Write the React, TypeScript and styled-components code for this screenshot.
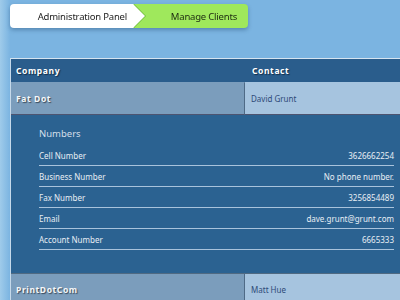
import React from "react";
import styled, { createGlobalStyle } from "styled-components";

const Global = createGlobalStyle`
  html, body { margin: 0; padding: 0; }
  body {
    width: 400px; height: 300px; overflow: hidden;
    background: linear-gradient(to right, #9fcbea 0px, #7bb4e1 10px, #7bb4e1 100%);
    font-family: "Noto Sans", "Open Sans", sans-serif;
  }
`;

const Page = styled.div`
  display: flex;
  flex-direction: column;
  padding: 4px 0 0 10px;
`;

const Crumbs = styled.div`
  display: flex;
  height: 24px;
  width: 238px;
  filter: drop-shadow(0 2px 2px rgba(40, 80, 120, 0.45));
`;

const CrumbFirst = styled.div`
  position: relative;
  z-index: 2;
  width: 123px;
  background: #fff;
  border-radius: 4px 0 0 4px;
  display: flex;
  align-items: center;
  justify-content: flex-end;
  padding-right: 6px;
  box-sizing: border-box;
  font-size: 9.5px;
  letter-spacing: -0.2px;
  color: #1c1c1c;
  &::after {
    content: "";
    position: absolute;
    right: -12px;
    top: 0;
    border-style: solid;
    border-width: 12px 0 12px 12px;
    border-color: transparent transparent transparent #fff;
  }
  &::before {
    content: "";
    position: absolute;
    right: -13px;
    top: 0;
    border-style: solid;
    border-width: 12px 0 12px 12px;
    border-color: transparent transparent transparent #6fb83a;
  }
`;

const CrumbLast = styled.div`
  flex: 1;
  background: #9fe85c;
  border-radius: 0 4px 4px 0;
  display: flex;
  align-items: center;
  justify-content: flex-end;
  padding-right: 11px;
  font-size: 9.5px;
  letter-spacing: -0.2px;
  color: #1c2a10;
`;

const Table = styled.div`
  margin-top: 30px;
  border-top: 1px solid #d6e4f0;
  border-left: 1px solid #c5d9ea;
  display: grid;
  grid-template-columns: 234px 1fr;
`;

const HeadCell = styled.div<{ $pad?: number }>`
  background: #2a5d8c;
  height: 23px;
  display: flex;
  align-items: center;
  padding-left: ${(p) => p.$pad ?? 5}px;
  font-size: 8.5px;
  font-weight: bold;
  letter-spacing: 0.6px;
  color: #fff;
  text-shadow: 1px 1px 1px #14304a;
`;

const CompanyCell = styled.div<{ $last?: boolean }>`
  background: #7b9dbc;
  height: 31px;
  display: flex;
  align-items: center;
  padding-left: 5px;
  font-size: 8.5px;
  font-weight: bold;
  letter-spacing: 0.6px;
  color: #f4f6f8;
  text-shadow: 1px 1px 1px #3a4a5a;
  border-right: 1px solid #4e6a86;
  border-bottom: 1px solid ${(p) => (p.$last ? "transparent" : "#4d5470")};
  border-top: 1px solid ${(p) => (p.$last ? "#506a82" : "transparent")};
`;

const ContactCell = styled.div<{ $last?: boolean }>`
  background: #a6c4df;
  height: 31px;
  display: flex;
  align-items: center;
  padding-left: 6px;
  font-size: 8px;
  color: #2e4a78;
  border-bottom: 1px solid ${(p) => (p.$last ? "transparent" : "#4d5470")};
  border-top: 1px solid ${(p) => (p.$last ? "#506a82" : "transparent")};
`;

const Detail = styled.div`
  grid-column: 1 / span 2;
  background: #2b6291;
  padding: 6px 6px 23px 28px;
`;

const DetailTitle = styled.div`
  font-size: 9.5px;
  color: #d4dfe9;
  height: 24px;
  display: flex;
  align-items: center;
`;

const InfoRow = styled.div`
  display: flex;
  justify-content: space-between;
  align-items: center;
  height: 20px;
  border-bottom: 1px solid #a9c3dc;
  font-size: 8px;
  color: #e8eef4;
`;

const rows: [string, string][] = [
  ["Cell Number", "3626662254"],
  ["Business Number", "No phone number."],
  ["Fax Number", "3256854489"],
  ["Email", "dave.grunt@grunt.com"],
  ["Account Number", "6665333"],
];

export default function App() {
  return (
    <>
      <Global />
      <Page>
        <Crumbs>
          <CrumbFirst>Administration Panel</CrumbFirst>
          <CrumbLast>Manage Clients</CrumbLast>
        </Crumbs>
        <Table>
          <HeadCell>Company</HeadCell>
          <HeadCell $pad={7}>Contact</HeadCell>
          <CompanyCell>Fat Dot</CompanyCell>
          <ContactCell>David Grunt</ContactCell>
          <Detail>
            <DetailTitle>Numbers</DetailTitle>
            {rows.map(([k, v]) => (
              <InfoRow key={k}>
                <span>{k}</span>
                <span>{v}</span>
              </InfoRow>
            ))}
          </Detail>
          <CompanyCell $last>PrintDotCom</CompanyCell>
          <ContactCell $last>Matt Hue</ContactCell>
        </Table>
      </Page>
    </>
  );
}
